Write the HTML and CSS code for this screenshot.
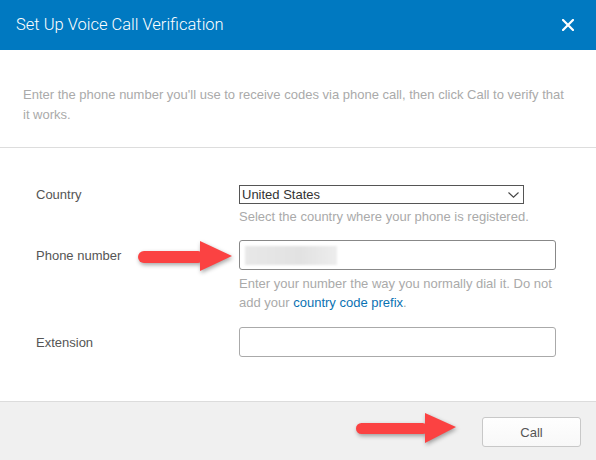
FILE: index.html
```html
<!DOCTYPE html>
<html lang="en">
<head>
    <meta charset="UTF-8">
    <meta name="viewport" content="width=device-width, initial-scale=1.0">
    <title>Set Up Voice Call Verification</title>
    <link rel="stylesheet" href="styles.css">
</head>
<body>
    <div class="dialog">
        <div class="dialog-header">
            <span class="dialog-title">Set Up Voice Call Verification</span>
            <svg class="close" width="12" height="12" viewBox="0 0 12 12">
                <path d="M1 1 L11 11 M11 1 L1 11" stroke="#fff" stroke-width="2.2" stroke-linecap="square"/>
            </svg>
        </div>
        <div class="intro">
            Enter the phone number you'll use to receive codes via phone call, then click Call to verify that it works.
        </div>
        <div class="form">
            <div class="field">
                <label class="label">Country</label>
                <div class="select">
                    <span>United States</span>
                    <svg width="11" height="6" viewBox="0 0 11 6">
                        <path d="M0.5 0.5 L5.5 5.2 L10.5 0.5" fill="none" stroke="#444" stroke-width="1.1"/>
                    </svg>
                </div>
                <div class="help">Select the country where your phone is registered.</div>
            </div>
            <div class="field phone">
                <label class="label">Phone number</label>
                <div class="input"><span class="blurred"></span></div>
                <div class="help">Enter your number the way you normally dial it. Do not add your <a href="#">country code prefix</a>.</div>
            </div>
            <div class="field">
                <label class="label">Extension</label>
                <div class="input"></div>
            </div>
        </div>
        <div class="dialog-footer">
            <button class="btn">Call</button>
        </div>

        <!-- annotation arrows -->
        <svg class="arrow arrow-phone" width="100" height="40" viewBox="0 0 100 40">
            <rect x="3" y="14" width="66" height="12" rx="6" fill="#fb4242"/>
            <polygon points="65,4 97,19 65,34" fill="#fb4242"/>
        </svg>
        <svg class="arrow arrow-call" width="106" height="38" viewBox="0 0 106 38">
            <rect x="2" y="13" width="72" height="11" rx="5.5" fill="#fb4242"/>
            <polygon points="71,3 102,17 71,33" fill="#fb4242"/>
        </svg>
    </div>
</body>
</html>
```

FILE: styles.css
```css
body {
    margin: 0;
    background-color: white;
    font-family: "Liberation Sans", Arial, sans-serif;
}
.dialog {
    position: relative;
    width: 596px;
    height: 460px;
    display: flex;
    flex-direction: column;
    background-color: white;
}
.dialog-header {
    height: 50px;
    flex-shrink: 0;
    background-color: #0079c1;
    display: flex;
    align-items: center;
    justify-content: space-between;
    padding: 0 22px 0 16px;
}
.dialog-title {
    color: white;
    font-family: Roboto, sans-serif;
    font-weight: 300;
    font-size: 16.5px;
    margin-top: -2px;
}
.close {
    display: block;
}
.intro {
    padding: 35px 30px 22px 23px;
    font-size: 13px;
    line-height: 20px;
    color: #aaa;
    border-bottom: 1px solid #ddd;
}
.form {
    flex: 1;
    padding: 37px 40px 0 36px;
}
.field {
    display: grid;
    grid-template-columns: 203px 1fr;
    align-items: center;
    margin-bottom: 14px;
}
.field.phone {
    margin-bottom: 15px;
}
.label {
    font-size: 13px;
    color: #555;
}
.select {
    width: 276px;
    height: 17px;
    border: 1px solid #555;
    display: flex;
    align-items: center;
    justify-content: space-between;
    padding: 0 4px 0 3px;
    box-sizing: content-box;
    font-size: 13px;
    color: #333;
}
.select span {
    margin-left: -1px;
}
.help {
    grid-column: 2;
    font-size: 13px;
    line-height: 19px;
    color: #aaa;
    margin-top: 3px;
}
.phone .help {
    margin-top: 4px;
}
.help a {
    color: #0a72b3;
    text-decoration: none;
}
.input {
    height: 28px;
    border: 1px solid #aaa;
    border-radius: 3px;
    display: flex;
    align-items: center;
    padding-left: 5px;
}
.phone .input {
    border-color: #888;
}
.blurred {
    width: 92px;
    height: 19px;
    background: linear-gradient(90deg, #e8e8e8, #e2e2e2 60%, #ededed);
    filter: blur(0.8px);
}
.dialog-footer {
    height: 59px;
    flex-shrink: 0;
    border-top: 1px solid #dcdcdc;
    background-color: #f0f0f0;
    display: flex;
    justify-content: flex-end;
    align-items: flex-start;
    padding: 15px 15px 0 0;
    box-sizing: border-box;
}
.btn {
    width: 99px;
    height: 30px;
    border: 1px solid #c8c8c8;
    border-radius: 3px;
    background: linear-gradient(#fefefe, #f8f8f8);
    font-family: "Liberation Sans", Arial, sans-serif;
    font-size: 13px;
    color: #555;
}
.arrow {
    position: absolute;
    filter: drop-shadow(1px 2px 2px rgba(0, 0, 0, 0.35));
}
.arrow-phone {
    left: 135px;
    top: 237px;
}
.arrow-call {
    left: 354px;
    top: 410px;
}
```
